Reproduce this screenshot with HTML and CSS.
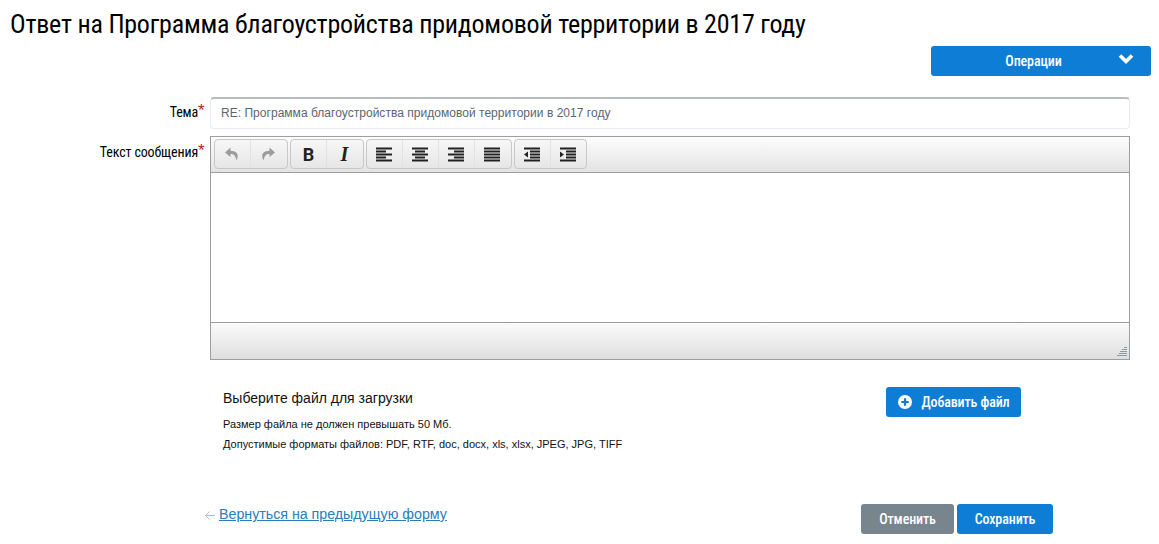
FILE: index.html
```html
<!DOCTYPE html>
<html lang="ru">
<head>
<meta charset="utf-8">
<title>Ответ</title>
<link rel="stylesheet" href="styles.css">
</head>
<body>
<main class="page">
  <h1 class="title"><span class="cond">Ответ на Программа благоустройства придомовой территории в 2017 году</span></h1>
  <div class="ops-row">
    <button class="btn ops"><span class="cond">Операции</span>
      <svg class="chev" width="16" height="12" viewBox="0 0 16 12"><path d="M2 2.5 L8 8.5 L14 2.5" fill="none" stroke="#fff" stroke-width="3.6"/></svg>
    </button>
  </div>
  <div class="row row-subject">
    <label class="label"><span class="cond">Тема</span><i class="req">*</i></label>
    <input class="input" value="RE: Программа благоустройства придомовой территории в 2017 году">
  </div>
  <div class="row row-editor">
    <label class="label"><span class="cond">Текст сообщения</span><i class="req">*</i></label>
    <div class="editor">
      <div class="toolbar">
        <div class="group">
          <span class="tool"><svg width="16" height="16" viewBox="0 0 16 16"><path fill="#9c9c9c" d="M6.5 1.5 L1 6.5 L6.5 11 V8 C10 8 11.5 9.5 12.5 14.5 C15.5 8.5 13 4.7 6.5 4.7 Z"/></svg></span>
          <span class="tool tool-redo"><svg width="16" height="16" viewBox="0 0 16 16"><path fill="#9c9c9c" d="M9.5 1.5 L15 6.5 L9.5 11 V8 C6 8 4.5 9.5 3.5 14.5 C.5 8.5 3 4.7 9.5 4.7 Z"/></svg></span>
        </div>
        <div class="group">
          <span class="tool glyph bold">B</span>
          <span class="tool glyph ital">I</span>
        </div>
        <div class="group">
          <span class="tool"><svg width="18" height="15" viewBox="0 0 18 15"><path d="M1 1.5H17M1 4.5H11M1 7.5H17M1 10.5H11M1 13.5H17" stroke="#222" stroke-width="2"/></svg></span>
          <span class="tool"><svg width="18" height="15" viewBox="0 0 18 15"><path d="M1 1.5H17M4 4.5H14M1 7.5H17M4 10.5H14M1 13.5H17" stroke="#222" stroke-width="2"/></svg></span>
          <span class="tool"><svg width="18" height="15" viewBox="0 0 18 15"><path d="M1 1.5H17M7 4.5H17M1 7.5H17M7 10.5H17M1 13.5H17" stroke="#222" stroke-width="2"/></svg></span>
          <span class="tool"><svg width="18" height="15" viewBox="0 0 18 15"><path d="M1 1.5H17M1 4.5H17M1 7.5H17M1 10.5H17M1 13.5H17" stroke="#222" stroke-width="2"/></svg></span>
        </div>
        <div class="group group-indent">
          <span class="tool"><svg width="18" height="15" viewBox="0 0 18 15"><path d="M1 1.5H17M7 4.5H17M7 7.5H17M7 10.5H17M1 13.5H17" stroke="#222" stroke-width="2"/><path d="M5 4.5V10.5L1 7.5Z" fill="#222"/></svg></span>
          <span class="tool"><svg width="18" height="15" viewBox="0 0 18 15"><path d="M1 1.5H17M7 4.5H17M7 7.5H17M7 10.5H17M1 13.5H17" stroke="#222" stroke-width="2"/><path d="M1 4.5V10.5L5 7.5Z" fill="#222"/></svg></span>
        </div>
      </div>
      <div class="area"></div>
      <div class="status">
        <svg class="grip" width="10" height="9" viewBox="0 0 10 9"><path d="M7 .5H10M5 2.5H10M3 4.5H10M2 6.5H10M0 8.5H10" stroke="#8f9aa3" stroke-width="1"/></svg>
      </div>
    </div>
  </div>
  <section class="upload">
    <div class="upload-text">
      <div class="upload-title">Выберите файл для загрузки</div>
      <div class="hint">Размер файла не должен превышать 50 Мб.</div>
      <div class="hint">Допустимые форматы файлов: PDF, RTF, doc, docx, xls, xlsx, JPEG, JPG, TIFF</div>
    </div>
    <button class="btn add">
      <svg width="14" height="14" viewBox="0 0 14 14"><circle cx="7" cy="7" r="7" fill="#fff"/><path d="M7 3.3V10.7M3.3 7H10.7" stroke="#0e7dd6" stroke-width="2.2"/></svg>
      <span class="cond">Добавить файл</span>
    </button>
  </section>
  <footer class="foot">
    <div class="back">
      <svg class="arrow" width="10" height="9" viewBox="0 0 10 9"><path d="M4.5 .5 L.7 4.5 L4.5 8.5 M.7 4.5H10" fill="none" stroke="#a9bccb" stroke-width="1"/></svg>
      <a href="#" class="back-link">Вернуться на предыдущую форму</a>
    </div>
    <div class="actions">
      <button class="btn cancel"><span class="cond">Отменить</span></button>
      <button class="btn save"><span class="cond">Сохранить</span></button>
    </div>
  </footer>
</main>
</body>
</html>
```
FILE: styles.css
```css
* { box-sizing: border-box; }
html, body { margin: 0; padding: 0; background: #fff; }
body { font-family: "Liberation Sans", Arial, sans-serif; color: #000; height: 544px; overflow: hidden; }
.page { padding: 0 8px 0 0; }
.cond { font-family: Roboto, "Liberation Sans", sans-serif; font-stretch: 75%; display: inline-block; }
.title { margin: 0; padding: 10px 0 0 10px; font-weight: 400; font-size: 26px; letter-spacing: -.235px; line-height: 29px; height: 46px; white-space: nowrap; }
.ops-row { display: flex; justify-content: flex-end; height: 30px; }
.btn { border: 0; border-radius: 3px; background: #0e7dd6; color: #fff; font-size: 14px; font-weight: 500; padding: 0; display: flex; align-items: center; justify-content: center; }
.btn .cond { letter-spacing: -.12px; }
.ops { width: 220px; height: 30px; position: relative; padding-right: 15px; }
.chev { position: absolute; right: 17px; top: 7px; }
.row { display: flex; }
.label { width: 210px; padding-right: 3px; display: flex; justify-content: flex-end; font-size: 14px; }
.label .cond { line-height: 18px; letter-spacing: -.15px; }
.req { color: #b5202a; font-style: normal; font-size: 17px; line-height: 16px; width: 9px; font-family: "Liberation Sans", sans-serif; }
.row-subject { margin-top: 21px; height: 32px; }
.row-subject .label { padding-top: 6px; }
.input { width: 920px; height: 32px; border: 1px solid #e6ecf1; border-top: 2px solid #b8bcbf; border-radius: 4px; padding: 0 10px 2px; font: 12px "Liberation Sans", sans-serif; letter-spacing: .03px; color: #5c6670; background: #fff; outline: 0; }
.row-editor { margin-top: 7px; }
.row-editor .label { padding-top: 7px; }
.editor { width: 920px; height: 224px; border: 1px solid #9e9e9e; display: flex; flex-direction: column; }
.toolbar { height: 36px; border-bottom: 1px solid #9e9e9e; background: linear-gradient(#fdfdfd, #e3e3e3); display: flex; gap: 2px; padding: 2px 0 0 3px; }
.group { height: 30px; display: flex; border: 1px solid #c8c8c8; border-radius: 4px; background: linear-gradient(#f7f7f7, #e6e6e6); }
.group-indent .tool:last-child { width: 35px; }
.tool { width: 36px; display: flex; align-items: center; justify-content: center; border-right: 1px solid #e2e2e2; }
.tool:last-child { border-right-color: transparent; }
.tool svg { margin-right: 1px; }
.tool-redo svg { margin-right: 2px; }
.glyph { font: 700 18px Roboto, "Liberation Sans", sans-serif; color: #222; }
.ital { font-style: italic; font-family: "Liberation Serif", serif; font-size: 20px; }
.area { flex: 1; background: #fff; }
.status { height: 37px; background: linear-gradient(#fbfbfb, #dedede); border-top: 1px solid #9e9e9e; display: flex; justify-content: flex-end; align-items: flex-end; padding: 0 2px 3px 0; }
.upload { display: flex; margin-top: 27px; padding-left: 223px; height: 73px; }
.upload-text { width: 663px; }
.upload-title { font-size: 14px; line-height: 16px; margin-top: 3px; margin-bottom: 12px; color: #111; }
.hint { font-size: 11px; line-height: 13px; margin-bottom: 7px; color: #111; }
.add { width: 135px; height: 30px; gap: 9px; padding-left: 1px; }
.foot { display: flex; margin-top: 44px; height: 30px; }
.back { width: 861px; padding-left: 205px; font-size: 14.25px; letter-spacing: -.02px; line-height: 20px; display: flex; align-items: flex-start; }
.arrow { margin: 7px 4px 0 0; }
.back-link { color: #2a7cbb; text-decoration: underline; }
.actions { display: flex; gap: 3px; }
.cancel { width: 93px; height: 30px; background: #78858f; }
.save { width: 96px; height: 30px; }
```
